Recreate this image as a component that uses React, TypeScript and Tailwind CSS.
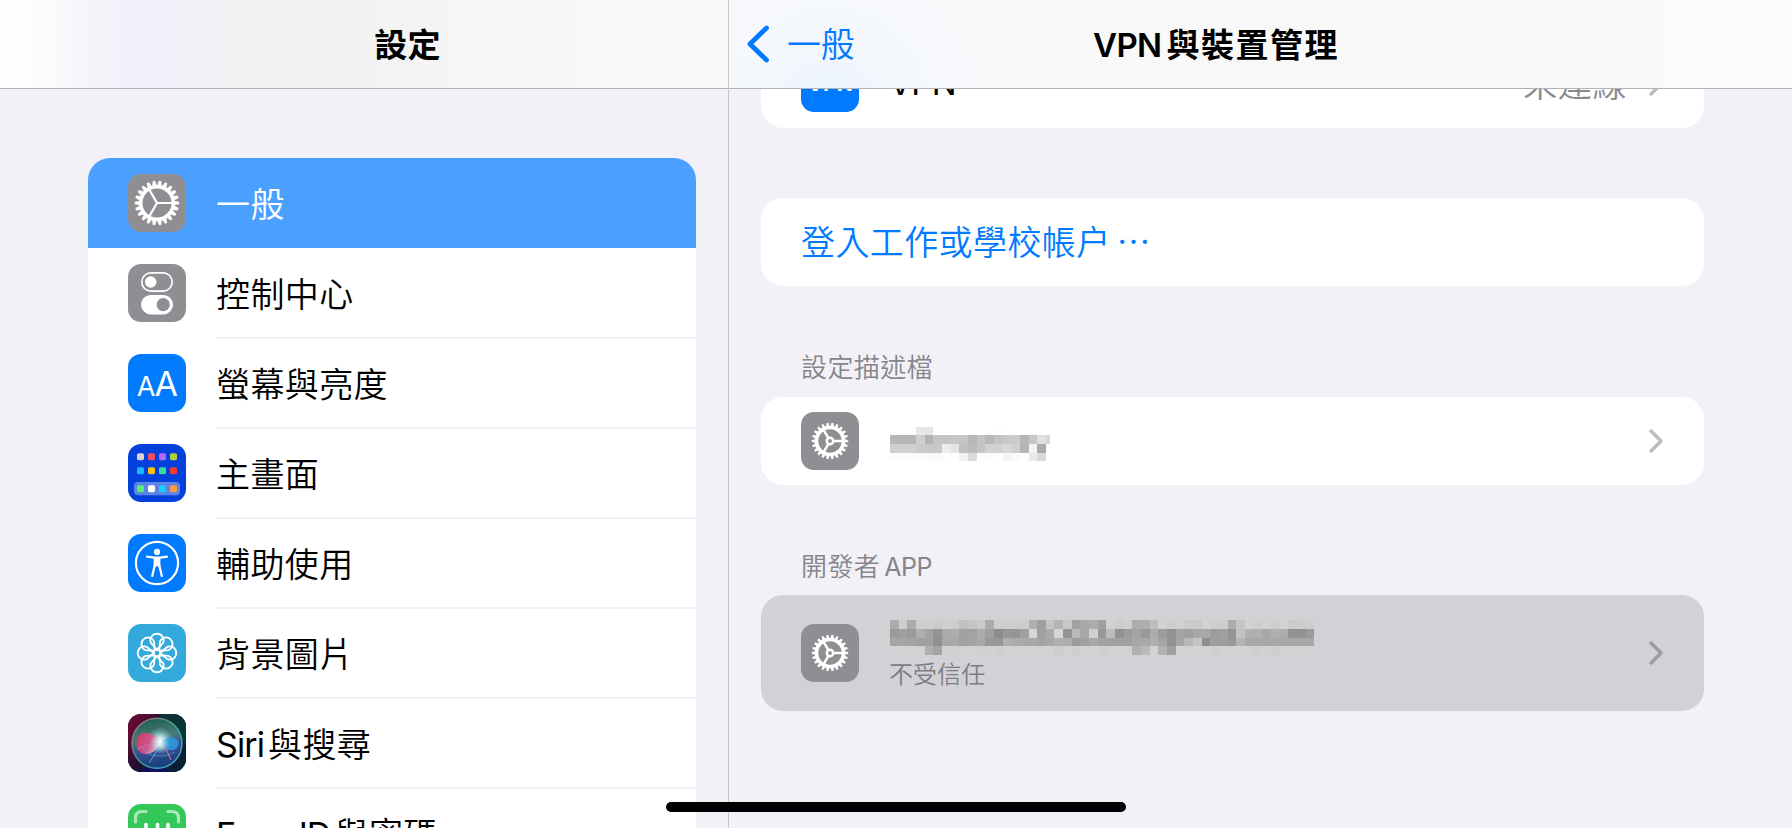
import type { ReactNode } from 'react'

interface SettingItem {
    label: string
    icon: ReactNode
    selected?: boolean
}

const range = (n: number) => Array.from({ length: n }, (_, i) => i)

// Latin runs are set tighter than the Chinese text and get a small gap after them
function Latin({ children }: { children: string }) {
    return <span className="font-normal tracking-[-0.9px] mr-1">{children}</span>
}

function IconTile({ className, children }: { className: string; children: ReactNode }) {
    return (
        <div className={`w-[58px] h-[58px] rounded-[13px] overflow-hidden shrink-0 ${className}`}>
            {children}
        </div>
    )
}

function GearIcon() {
    return (
        <svg viewBox="0 0 58 58" fill="none" stroke="#fff">
            {range(22).map(i => (
                <path key={i} d="M46 26.7 L51.200 27.800 V30.200 L46 31.3Z" fill="#fff" stroke="none" transform={`rotate(${(i * 360) / 22} 29 29)`} />
            ))}
            <circle cx="29" cy="29" r="16.2" strokeWidth="3.4" />
            {[0, 120, 240].map(a => (
                <path key={a} d="M29 29H45" strokeWidth="2.2" transform={`rotate(${a} 29 29)`} />
            ))}
        </svg>
    )
}

function ProfileGearIcon() {
    return (
        <svg viewBox="0 0 58 58" fill="none" stroke="#fff">
            {range(22).map(i => (
                <path key={i} d="M43 27.3 L47.200 28 V30 L43 30.7Z" fill="#fff" stroke="none" transform={`rotate(${(i * 360) / 22} 29 29)`} />
            ))}
            <circle cx="29" cy="29" r="13.5" strokeWidth="3.6" />
            <circle cx="29" cy="29" r="3.2" strokeWidth="2.6" />
            {[0, 120, 240].map(a => (
                <path key={a} d="M32.5 29H42" strokeWidth="2.5" transform={`rotate(${a} 29 29)`} />
            ))}
        </svg>
    )
}

function ControlCenterIcon() {
    return (
        <svg viewBox="0 0 58 58">
            <rect x="13.8" y="8.8" width="30.4" height="18.4" rx="9.2" fill="none" stroke="#fff" strokeWidth="1.7" />
            <circle cx="22.7" cy="18" r="5.8" fill="#fff" />
            <rect x="13" y="31" width="32" height="19.4" rx="9.7" fill="#fff" />
            <circle cx="35.2" cy="40.7" r="6.6" fill="#8e8e93" />
        </svg>
    )
}

const APP_DOTS = [
    ['#d6d3d0', '#fd4d62', '#b36bff', '#b0d136'],
    ['#1cb8ff', '#ffc107', '#3ddba4', '#ff3a30'],
    ['#55ef71', '#ffffff', '#1ccbff', '#ff9b42'],
]

function HomeScreenIcon() {
    return (
        <svg viewBox="0 0 58 58">
            <rect x="6" y="38" width="46" height="13.3" rx="4" fill="#5b83e8" />
            {APP_DOTS.map((row, r) =>
                row.map((color, c) => (
                    <rect key={color} x={9 + c * 11} y={[9.2, 23.2, 41.2][r]} width="7" height="7" rx="1.6" fill={color} />
                ))
            )}
        </svg>
    )
}

function AccessibilityIcon() {
    return (
        <svg viewBox="0 0 58 58" fill="none" stroke="#fff">
            <circle cx="29" cy="29" r="21.1" strokeWidth="2.2" />
            <circle cx="29" cy="17.9" r="3.1" fill="#fff" stroke="none" />
            <path d="M19 22.6L26 23.7H32L39 22.6" strokeWidth="2.2" strokeLinecap="round" strokeLinejoin="round" />
            <path d="M25.6 23.5H32.4V32H25.6Z" fill="#fff" stroke="none" />
            <path d="M26.8 31L24.2 42M31.2 31L33.8 42" strokeWidth="2.2" strokeLinecap="round" />
            <path d="M26 33L29 30.5L32 33" strokeWidth="2" />
        </svg>
    )
}

function WallpaperIcon() {
    return (
        <svg viewBox="0 0 58 58" fill="none" stroke="#fff" strokeWidth="1.8">
            {range(8).map(i => (
                <path
                    key={i}
                    d="M29 25.8 L22.8 18.6 A6.6 6.6 0 1 1 35.2 18.6 Z"
                    strokeLinejoin="round"
                    transform={`rotate(${i * 45} 29 29)`}
                />
            ))}
            <circle cx="29" cy="29" r="3.2" strokeWidth="1.5" />
        </svg>
    )
}

function SiriIcon() {
    return (
        <svg viewBox="0 0 58 58">
            <defs>
                <linearGradient id="siri-bg" x1="0" y1="0.2" x2="1" y2="0.8">
                    <stop offset="0" stopColor="#6a0a32" />
                    <stop offset="0.45" stopColor="#1b1030" />
                    <stop offset="1" stopColor="#062238" />
                </linearGradient>
                <linearGradient id="siri-top" x1="0.3" y1="0" x2="0.5" y2="1">
                    <stop offset="0" stopColor="#1f5f50" />
                    <stop offset="0.4" stopColor="#4a7a78" />
                    <stop offset="0.62" stopColor="#3a4f92" />
                    <stop offset="1" stopColor="#123f78" />
                </linearGradient>
                <linearGradient id="siri-rim" x1="0" y1="0" x2="1" y2="1">
                    <stop offset="0" stopColor="#b45a75" />
                    <stop offset="0.5" stopColor="#3aa58a" />
                    <stop offset="1" stopColor="#3fa4e0" />
                </linearGradient>
                <linearGradient id="siri-pink" x1="0" y1="0" x2="1" y2="0.4">
                    <stop offset="0" stopColor="#e0315f" />
                    <stop offset="0.6" stopColor="#d8568c" />
                    <stop offset="1" stopColor="#f3c9dc" />
                </linearGradient>
                <radialGradient id="siri-glow">
                    <stop offset="0" stopColor="#fff" />
                    <stop offset="0.25" stopColor="#e8fbff" stopOpacity="0.75" />
                    <stop offset="1" stopColor="#8fe0e0" stopOpacity="0" />
                </radialGradient>
            </defs>
            <rect width="58" height="58" fill="url(#siri-bg)" />
            <path d="M30 0H58V30Z" fill="#083c35" opacity="0.8" />
            <path d="M10 58L29 46L40 58Z" fill="#10106a" opacity="0.7" />
            <circle cx="29" cy="29.3" r="25" fill="url(#siri-top)" stroke="url(#siri-rim)" strokeWidth="1.5" />
            <circle cx="32" cy="27" r="14" fill="url(#siri-glow)" />
            <path d="M34 29C27 19 13 14 9 25C6.500 36 14 43 23 39C27 37 30 33 34 29Z" fill="url(#siri-pink)" opacity="0.9" />
            <path d="M32 29C38 22 48 21 50.500 28C51 36 44 38 39 35C35 32 34 30 32 29Z" fill="#2f97dd" opacity="0.9" />
            <path d="M9 35C17 31 24 29 32 29C38 31 40 40 43 46" fill="none" stroke="#d07a98" strokeWidth="1.2" opacity="0.9" />
            <path d="M14 33C20 44 36 44 47 38" fill="none" stroke="#5fb4e6" strokeWidth="1" opacity="0.6" />
            <path d="M32 29C29 37 25 43 21 49" fill="none" stroke="#7cc9d8" strokeWidth="1" opacity="0.7" />
            <circle cx="32" cy="28.500" r="10" fill="url(#siri-glow)" />
        </svg>
    )
}

function FaceIdIcon() {
    return (
        <svg viewBox="0 0 58 58" fill="none" stroke="#fff" strokeLinecap="round">
            <path
                d="M7.500 18V14Q7.500 7.500 14 7.500H18M40 7.500H44Q50.500 7.500 50.500 14V18M7.500 39V44Q7.500 50.500 14 50.500H18M40 50.500H44Q50.500 50.500 50.500 44V39"
                stroke="#a9e6b8"
                strokeWidth="3.2"
            />
            <path d="M18 20.500V26M40 20.500V26M29.500 20.500V32Q29.500 34 27 34M19 39Q29 47 39 39" strokeWidth="3.6" />
        </svg>
    )
}

function Chevron({ className = 'text-[#bcbcc0]' }: { className?: string }) {
    return (
        <svg className={`w-4 h-[26px] shrink-0 ${className}`} viewBox="0 0 16 26" fill="none">
            <path d="M3 3L13 13L3 23" stroke="currentColor" strokeWidth="3.4" strokeLinecap="round" strokeLinejoin="round" />
        </svg>
    )
}

// Censored names, one grey level (hex) per block
const PROFILE_NAME = [
    'ff ff ff e7 e5 ff ff ff ff ff ff ff fe ff ff ff ff ff ff',
    'b7 b4 b6 cf b3 c5 c5 c7 c6 b7 c4 b9 c4 c8 cb b6 c7 e0 d6',
    'cf d0 d0 ca c8 c8 ed e3 c0 bc c4 d1 d1 d8 cf b5 f3 aa ff',
    'fc fc fc fc fc f9 fd fd f3 db fd fc ff f4 fa fd ea da ff',
]
const DEVELOPER_NAME = [
    'ac ce ac cd ce cb d0 cd c0 c4 cb ac ce cd cd cd b0 a0 c4 b4 c8 a2 aa ac a0 d0 cc d0 ac ae be d2 cd d0 cb cb d2 cd cd ac c4 d2 cd d2 cd d2 cb cd cd',
    '9a a0 9a ae a2 94 aa ae a0 a2 ac a0 8c 98 94 a0 d6 a0 aa d6 94 b8 a8 d0 98 bc 92 9c a4 98 ac 9c 92 a4 a0 a8 a8 9c a0 94 c2 b0 b0 a6 b0 ac 92 92 9c',
    'a6 a6 a4 a0 a0 90 a8 aa a2 a4 aa 98 96 b0 aa a8 a8 a4 a8 b0 ae 9c a0 a8 a2 a0 a0 a0 a8 a8 ae a6 92 a6 b8 c4 8e 9e 9e 98 b4 a8 a8 a8 a8 a8 a8 a8 a8',
    'd2 d2 d2 d2 b0 a4 d2 cf d2 d2 cf d2 cf d2 d2 d2 d2 d2 d2 cd d2 cf d2 d2 cf d2 d2 d2 b0 ba d2 b2 a0 d2 d2 d2 d2 cf d2 d2 d2 d2 cf d2 cf d2 d2 d2 d2',
]

function Mosaic({ rows }: { rows: string[] }) {
    return (
        <div className="flex flex-col">
            {rows.map((row, r) => (
                <div key={r} className="flex h-[8.67px]">
                    {row.split(' ').map((v, c) => (
                        <div key={c} className="w-[8.67px] shrink-0" style={{ backgroundColor: `#${v}${v}${v}` }} />
                    ))}
                </div>
            ))}
        </div>
    )
}

const ITEMS: SettingItem[] = [
    { label: '一般', selected: true, icon: <IconTile className="bg-[#8e8e93]"><GearIcon /></IconTile> },
    { label: '控制中心', icon: <IconTile className="bg-[#8e8e93]"><ControlCenterIcon /></IconTile> },
    {
        label: '螢幕與亮度',
        icon: (
            <IconTile className="bg-[#007aff] text-white">
                <div className="flex h-full items-baseline justify-center pt-2 font-normal">
                    <span className="text-[27px] leading-[44px] tracking-[-0.8px]">A</span>
                    <span className="text-[34px] leading-[44px] tracking-[-0.8px]">A</span>
                </div>
            </IconTile>
        ),
    },
    { label: '主畫面', icon: <IconTile className="bg-[#0440dc]"><HomeScreenIcon /></IconTile> },
    { label: '輔助使用', icon: <IconTile className="bg-[#007aff]"><AccessibilityIcon /></IconTile> },
    { label: '背景圖片', icon: <IconTile className="bg-[#34aadc]"><WallpaperIcon /></IconTile> },
    { label: 'Siri與搜尋', icon: <IconTile className="bg-black"><SiriIcon /></IconTile> },
    { label: 'Face ID與密碼', icon: <IconTile className="bg-[#34c759]"><FaceIdIcon /></IconTile> },
]

function ItemLabel({ label }: { label: string }) {
    const latin = label.match(/^[A-Za-z ]+/)?.[0] ?? ''
    return (
        <span className="text-[34px] leading-[48px] tracking-[0.4px] whitespace-nowrap">
            {latin && <Latin>{latin}</Latin>}
            {label.slice(latin.length)}
        </span>
    )
}

function Sidebar() {
    return (
        <aside className="w-[729px] shrink-0 border-r border-[#c6c6c9] flex flex-col">
            <header className="h-[89px] shrink-0 border-b border-[#b2b2b5] flex items-center justify-center pl-[87px] bg-[linear-gradient(90deg,#ffffff_0px,#fbfbfc_50px,#f3f3fa_100px,#f0f0fc_150px,#f1f1f6_200px,#f2f2f2_250px,#f3f3f3_380px,#f7f7f7_500px,#f9f9f9_728px)]">
                <h1 className="mt-px text-[33px] leading-[48px] font-bold tracking-[0.3px]">設定</h1>
            </header>
            <div className="pt-[68.5px] pl-[88px] pr-8">
                <ul className="bg-white rounded-t-[22px] overflow-hidden">
                    {ITEMS.map(item => (
                        <li
                            key={item.label}
                            className={`h-[90px] flex pl-10 ${item.selected ? 'bg-[#4ba0ff] text-white' : ''}`}
                        >
                            <div className="pt-4">{item.icon}</div>
                            <div
                                className={`ml-[30px] h-[91px] flex-1 flex items-center pt-1.5 border-b-2 ${item.selected ? 'border-transparent' : 'border-[#f1f1f2]'}`}
                            >
                                <ItemLabel label={item.label} />
                            </div>
                        </li>
                    ))}
                </ul>
            </div>
        </aside>
    )
}

function Detail() {
    return (
        <main className="flex-1 min-w-0 flex flex-col overflow-hidden">
            <header className="h-[89px] shrink-0 z-10 border-b border-[#b2b2b5] grid grid-cols-[364px_1fr_456px] items-center bg-[radial-gradient(circle_at_100px_110px,#e9f2ff_0px,#f3f7fd_60px,#f9f9fa_180px,#f8f8f8_600px,#fcfcfc_1060px)]">
                <div className="flex items-center pl-[17px] text-[#007aff]">
                    <svg className="w-6 h-10" viewBox="0 0 24 40" fill="none">
                        <path d="M20.500 4L4 20L20.500 36" stroke="currentColor" strokeWidth="4.800" strokeLinecap="round" strokeLinejoin="round" />
                    </svg>
                    <span className="ml-[17px] mt-px text-[34px] leading-[48px] tracking-[-0.2px]">一般</span>
                </div>
                <h2 className="mt-px text-[33px] leading-[48px] font-bold whitespace-nowrap tracking-[1.5px]">
                    <span className="font-semibold tracking-[-0.6px] mr-[5px]">VPN</span>與裝置管理
                </h2>
            </header>

            <div className="-mt-[49px] pl-8 pr-[88px]">
                {/* VPN */}
                <section className="h-[88px] bg-white rounded-[22px] flex items-center px-10">
                    <div className="-mt-0.5">
                        <IconTile className="bg-[#007aff] text-white text-[21px] leading-[60px] font-bold text-center">VPN</IconTile>
                    </div>
                    <span className="ml-[30px] text-[33px] font-normal tracking-[-0.6px]">VPN</span>
                    <span className="ml-auto mr-[21px] text-[34px] text-[#8a8a8e] tracking-[0.6px]">未連線</span>
                    <Chevron />
                </section>

                {/* Work account */}
                <section className="mt-[70px] h-[88px] bg-white rounded-[22px] flex items-center px-10">
                    <span className="mt-0.5 text-[34px] leading-[48px] text-[#007aff] tracking-[0.4px]">
                        登入工作或學校帳户<span className="ml-1.5">⋯</span>
                    </span>
                </section>

                {/* Profiles */}
                <h3 className="mt-[62px] h-[49px] pl-10 text-[26px] leading-10 text-[#85858a] tracking-[0.4px]">設定描述檔</h3>
                <section className="h-[88px] bg-white rounded-[22px] flex items-center px-10">
                    <IconTile className="bg-[#8e8e93]"><ProfileGearIcon /></IconTile>
                    <div className="ml-[31px] mt-1.5 w-[160px] overflow-hidden">
                        <Mosaic rows={PROFILE_NAME} />
                    </div>
                    <div className="ml-auto"><Chevron /></div>
                </section>

                {/* Developer app */}
                <h3 className="mt-[62px] h-12 pl-10 text-[26px] leading-10 text-[#85858a] tracking-[0.4px]">
                    開發者<span className="ml-1 text-[25px] font-normal tracking-[-0.4px]">APP</span>
                </h3>
                <section className="h-[116px] bg-[#d2d1d6] rounded-[22px] flex items-center px-10">
                    <IconTile className="bg-[#8e8e93]"><ProfileGearIcon /></IconTile>
                    <div className="ml-[31px] mt-2">
                        <Mosaic rows={DEVELOPER_NAME} />
                        <p className="pt-px -ml-px text-[24px] leading-[38px] tracking-[0.1px] text-[#7d7d82]">不受信任</p>
                    </div>
                    <div className="ml-auto"><Chevron className="text-[#9c9ca1]" /></div>
                </section>
            </div>
        </main>
    )
}

export default function App() {
    return (
        <div className="relative w-[1792px] h-[828px] overflow-hidden flex bg-[#f2f1f7] text-black font-[350] font-[Inter,'Noto_Sans_CJK_TC',sans-serif]">
            <Sidebar />
            <Detail />
            {/* Home indicator */}
            <div className="absolute z-20 left-[666px] bottom-4 w-[460px] h-[10px] rounded-full bg-black" />
        </div>
    )
}
